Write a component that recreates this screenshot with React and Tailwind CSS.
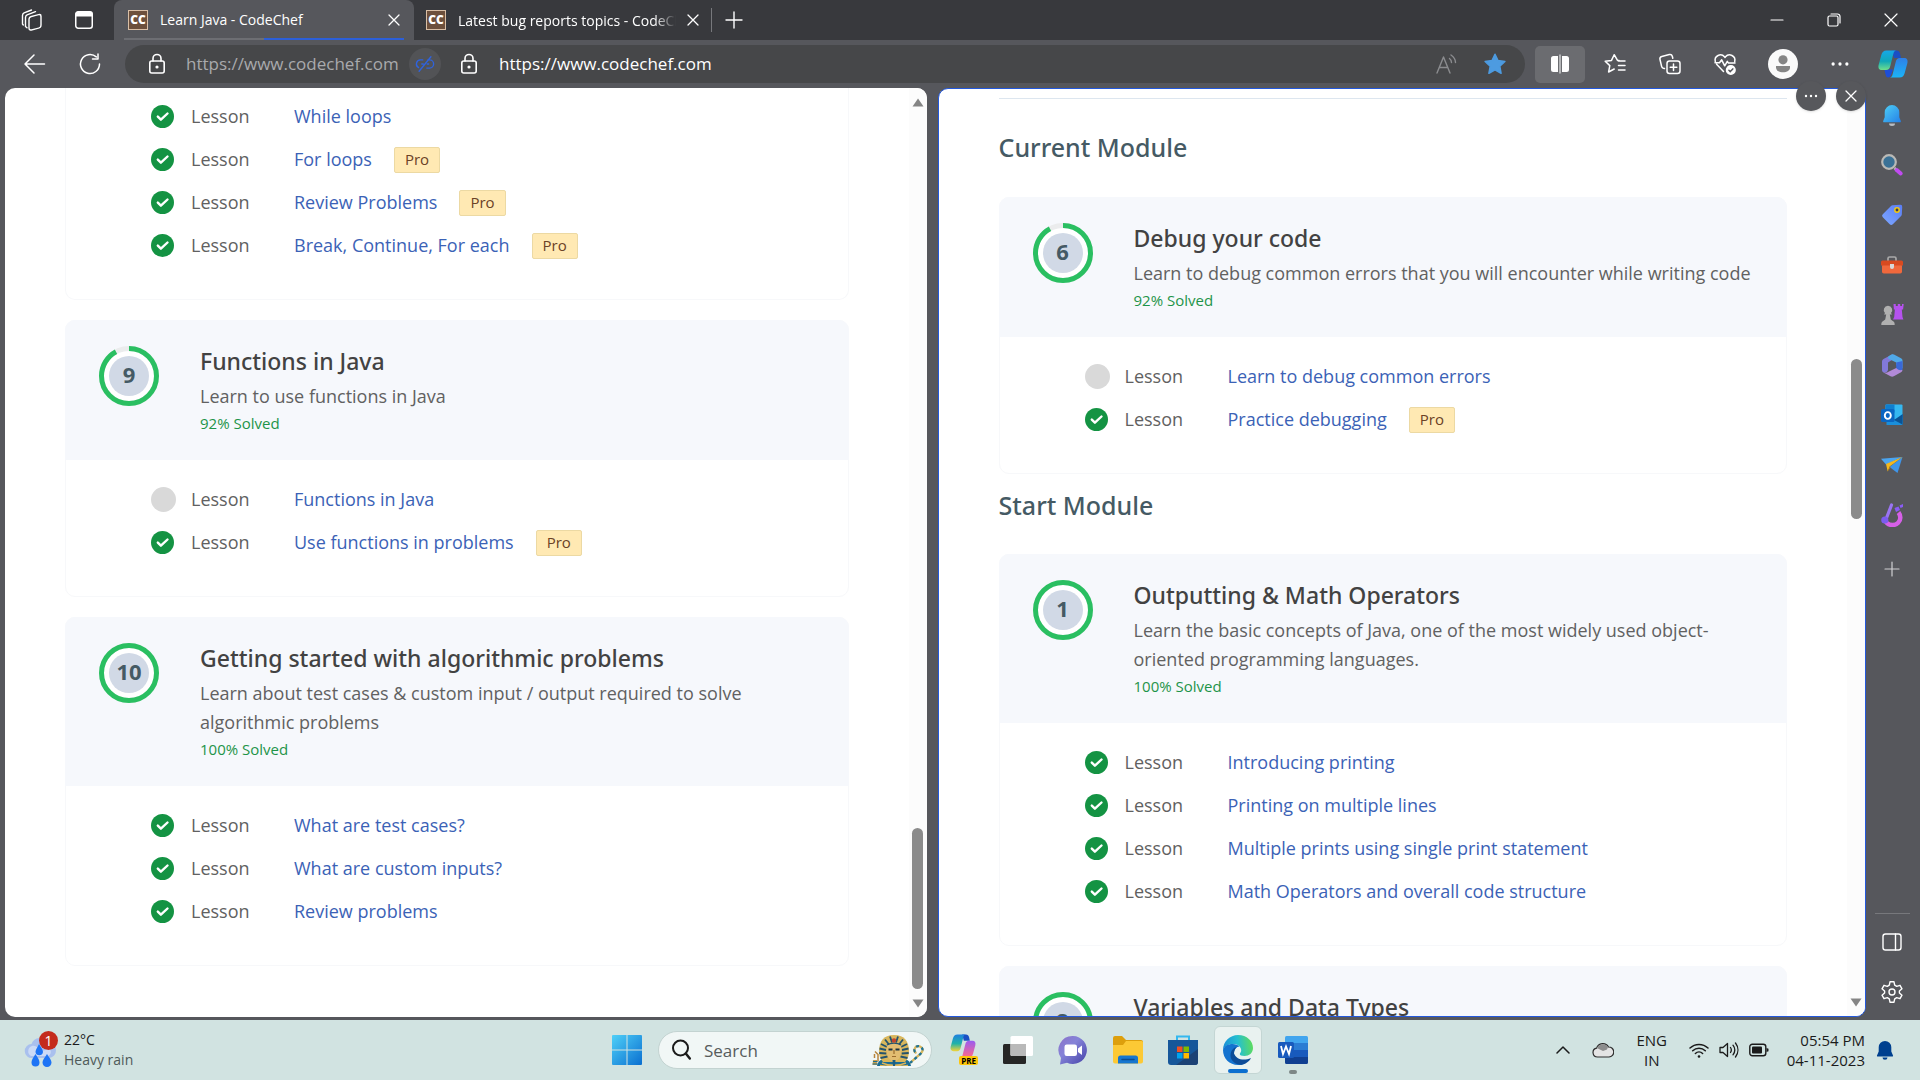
import React from "react";

const rightModules = [
  {
    number: 1,
    title: "Outputting & Math Operators",
    text: "Learn the basic concepts of Java, one of the most widely used object-oriented programming languages.",
    solved: 100,
    lessons: [
      { name: "Introducing printing", done: true },
      { name: "Printing on multiple lines", done: true },
      { name: "Multiple prints using single print statement", done: true },
      { name: "Math Operators and overall code structure", done: true },
    ],
  },
  {
    number: 2,
    title: "Variables and Data Types",
    solved: 100,
    lessons: [],
  },
];

const currentModule = {
  number: 6,
  title: "Debug your code",
  text: "Learn to debug common errors that you will encounter while writing code",
  solved: 92,
  lessons: [
    { name: "Learn to debug common errors", done: false },
    { name: "Practice debugging", done: true, pro: true },
  ],
};

const loopLessons = [
  { name: "While loops", done: true },
  { name: "For loops", done: true, pro: true },
  { name: "Review Problems", done: true, pro: true },
  { name: "Break, Continue, For each", done: true, pro: true },
];

const leftModules = [
  {
    number: 9,
    title: "Functions in Java",
    text: "Learn to use functions in Java",
    solved: 92,
    lessons: [
      { name: "Functions in Java", done: false },
      { name: "Use functions in problems", done: true, pro: true },
    ],
  },
  {
    number: 10,
    title: "Getting started with algorithmic problems",
    text: "Learn about test cases & custom input / output required to solve algorithmic problems",
    solved: 100,
    lessons: [
      { name: "What are test cases?", done: true },
      { name: "What are custom inputs?", done: true },
      { name: "Review problems", done: true },
    ],
  },
];

/* ---------- course content ---------- */

function ProgressRing({ number, percent }) {
  const length = 2 * Math.PI * 27.5;
  return (
    <div className="grid h-[60px] w-[60px] shrink-0 place-items-center">
      <svg viewBox="0 0 60 60" className="col-start-1 row-start-1 h-[60px] w-[60px]" aria-hidden="true">
        <circle cx="30" cy="30" r="27.5" fill="#fff" stroke="#ebeced" strokeWidth="5" />
        <circle
          cx="30"
          cy="30"
          r="27.5"
          fill="none"
          stroke="#2abf61"
          strokeWidth="5"
          strokeDasharray={`${(length * percent) / 100} ${length}`}
          transform="rotate(-90 30 30)"
        />
        <circle cx="30" cy="30" r="20" fill="#d1d9e6" />
      </svg>
      <span className="col-start-1 row-start-1 pb-1 text-[22px] leading-[28px] font-bold text-[#455a64]">{number}</span>
    </div>
  );
}

function Status({ done }) {
  if (!done) {
    return (
      <svg viewBox="0 0 25 25" className="h-[25px] w-[25px]" role="img" aria-label="Not completed">
        <circle cx="12.5" cy="12.5" r="12.5" fill="#d9d9d9" />
      </svg>
    );
  }
  return (
    <svg viewBox="0 0 23 23" className="h-[23px] w-[23px]" role="img" aria-label="Completed">
      <circle cx="11.5" cy="11.5" r="11.5" fill="#149343" />
      <path d="M6.8 11.6l3.1 3.1 6.6-6.2" fill="none" stroke="#fff" strokeWidth="2.4" strokeLinecap="round" strokeLinejoin="round" />
    </svg>
  );
}

function Lessons({ items }) {
  return (
    <ul className="pt-[18px] pb-8 pl-[85px]">
      {items.map((l) => (
        <li key={l.name} className="flex h-[43px] items-center text-[18px]">
          <span className="w-10">
            <Status done={l.done} />
          </span>
          <span className="w-[103px] text-[#616161]">Lesson</span>
          <a href="#lesson" className="text-[#3b62b6]">{l.name}</a>
          {l.pro && (
            <span className="ml-[22px] flex h-[26px] items-center rounded-[2px] border border-[#ecd9a3] bg-[#ffe9b3] px-[10px] text-[15px] text-[#6b4226]">
              Pro
            </span>
          )}
        </li>
      ))}
    </ul>
  );
}

function ModuleCard({ data }) {
  return (
    <section className="rounded-[10px] border border-[#f7f8fa]">
      <header className="-mx-px -mt-px flex rounded-t-[10px] bg-[#f6f8fc] pt-[26px] pb-[25px] pl-[34px]">
        <ProgressRing number={data.number} percent={data.solved} />
        <div className="ml-[41px] pr-6">
          <h3 className="font-['Noto_Sans',sans-serif] text-[23px] leading-[31px] font-medium text-[#424242]">{data.title}</h3>
          {data.text && <p className="mt-[5px] text-[18px] leading-[29px] text-[#616161]">{data.text}</p>}
          <p className="text-[15px] leading-[24px] text-[#1e9449]">{data.solved}% Solved</p>
        </div>
      </header>
      <Lessons items={data.lessons} />
    </section>
  );
}

function Scrollbar({ space, thumb, up }) {
  return (
    <div className="flex w-[18px] shrink-0 flex-col items-center bg-[#fcfcfc] pt-[10px] pb-[9px]">
      <svg viewBox="0 0 12 9" className={up ? "h-[9px] w-3" : "invisible h-[9px] w-3"}>
        <path d="M6 0.5l5.5 8H.5z" fill="#858585" />
      </svg>
      <div className="w-[11px] shrink-0" style={{ flexGrow: space[0] }} />
      <div className="w-[11px] rounded-full bg-[#8b8b8b]" style={{ flexGrow: thumb }} />
      <div className="w-[11px] shrink-0" style={{ flexGrow: space[1] }} />
      <svg viewBox="0 0 12 9" className="h-[9px] w-3">
        <path d="M6 8.5l5.5-8H.5z" fill="#858585" />
      </svg>
    </div>
  );
}

function LeftPane() {
  return (
    <main className="flex min-w-0 flex-[921] overflow-hidden rounded-[10px] bg-white">
      <div className="min-w-0 flex-1 overflow-hidden px-[60px]">
        <section className="-mt-[11px] rounded-b-[10px] border border-t-0 border-[#f7f8fa]">
          <Lessons items={loopLessons} />
        </section>
        <div className="mt-5 flex flex-col gap-5">
          {leftModules.map((m) => (
            <ModuleCard key={m.number} data={m} />
          ))}
        </div>
      </div>
      <Scrollbar space={[715, 10]} thumb={160} up />
    </main>
  );
}

function RightPane() {
  return (
    <div className="relative flex min-w-0 flex-[928]">
      <main className="flex min-w-0 flex-1 overflow-hidden rounded-[10px] border border-[#2358dc] bg-white">
        <div className="min-w-0 flex-1 overflow-hidden px-[60px] pt-[9px]">
          <hr className="border-[#dde6ef]" />
          <h2 className="mt-[31px] mb-[33px] font-['Noto_Sans',sans-serif] text-[25px] leading-[34px] font-medium text-[#455a64]">Current Module</h2>
          <ModuleCard data={currentModule} />
          <h2 className="mt-[14px] mb-8 font-['Noto_Sans',sans-serif] text-[25px] leading-[34px] font-medium text-[#455a64]">Start Module</h2>
          <div className="flex flex-col gap-5">
            {rightModules.map((m) => (
              <ModuleCard key={m.number} data={m} />
            ))}
          </div>
        </div>
        <Scrollbar space={[247, 472]} thumb={158} />
      </main>
      <div className="absolute -top-[7px] right-0 flex gap-[10px] text-white">
        <button aria-label="More options" className="grid h-[30px] w-[30px] place-items-center rounded-full bg-[#57585c] shadow">
          <Dots className="h-4 w-4" />
        </button>
        <button aria-label="Close pane" className="grid h-[30px] w-[30px] place-items-center rounded-full bg-[#57585c] shadow">
          <Cross className="h-3 w-3" />
        </button>
      </div>
    </div>
  );
}

/* ---------- browser chrome ---------- */

function Line({ box = 24, className = "h-6 w-6", width = 1.5, children }) {
  return (
    <svg
      viewBox={`0 0 ${box} ${box}`}
      className={className}
      fill="none"
      stroke="currentColor"
      strokeWidth={width}
      strokeLinecap="round"
      strokeLinejoin="round"
      aria-hidden="true"
    >
      {children}
    </svg>
  );
}

function Cross({ className = "h-3 w-3" }) {
  return (
    <Line box={12} className={className} width={1.3}>
      <path d="M1 1l10 10M11 1L1 11" />
    </Line>
  );
}

function Dots({ className = "h-5 w-5" }) {
  return (
    <svg viewBox="0 0 16 16" className={className} fill="currentColor" aria-hidden="true">
      <circle cx="3" cy="8" r="1.2" />
      <circle cx="8" cy="8" r="1.2" />
      <circle cx="13" cy="8" r="1.2" />
    </svg>
  );
}

function Favicon() {
  return (
    <span className="grid h-5 w-5 shrink-0 place-items-center border border-[#d9bfa6] bg-[#6d503c] text-[12px] leading-none font-extrabold text-white">
      CC
    </span>
  );
}

function Lock() {
  return (
    <Line className="h-6 w-6 shrink-0" width={1.6}>
      <rect x="4.8" y="9" width="14.4" height="12" rx="2" />
      <path d="M8 9V6.500a4 4 0 0 1 8 0V9" />
      <circle cx="12" cy="15" r=".8" fill="currentColor" />
    </Line>
  );
}

function TabBar() {
  return (
    <div className="flex h-10 bg-[#38393d] text-white">
      <div className="flex w-[114px] items-center gap-[30px] pl-5">
        <button aria-label="Workspaces">
          <Line width={1.4}>
            <rect x="9" y="7.500" width="12" height="13.500" rx="2.400" transform="skewY(-14) translate(0 3.800)" />
            <path d="M5.500 18.500V9.500a3 3 0 0 1 1.600-2.600L15.500 3.600M2.500 16V7.500A3 3 0 0 1 4.100 4.900L11.500 2M5.500 18.500l1.500 1.300M2.500 16l.8 1" />
          </Line>
        </button>
        <button aria-label="Tab actions">
          <svg viewBox="0 0 20 20" className="h-5 w-5">
            <rect x="1.750" y="1.750" width="16.500" height="16.500" rx="2.500" fill="none" stroke="#fff" strokeWidth="1.500" />
            <path d="M1.500 6.500V4a2.500 2.500 0 0 1 2.500-2.500h12A2.500 2.500 0 0 1 18.500 4v2.500z" fill="#fff" />
          </svg>
        </button>
      </div>
      <div className="flex w-[300px] flex-col rounded-t-lg bg-[#56575c] px-[10px]">
        <div className="flex flex-1 items-center pt-px pr-1 pl-1">
          <Favicon />
          <span className="ml-3 flex-1 text-[14px]">Learn Java - CodeChef</span>
          <button aria-label="Close Learn Java tab">
            <Cross />
          </button>
        </div>
        <div className="flex h-[2px]">
          <span className="flex-1 bg-[#6d6e73]" />
          <span className="flex-1 bg-[#2c5fd8]" />
        </div>
      </div>
      <div className="flex w-[298px] items-center pr-0 pl-3">
        <Favicon />
        <span className="ml-3 w-[218px] overflow-hidden [mask-image:linear-gradient(to_right,#000_90%,transparent)] text-[14px] whitespace-nowrap">
          Latest bug reports topics - CodeChef
        </span>
        <button aria-label="Close Latest bug reports tab" className="ml-[11px]">
          <Cross />
        </button>
        <span className="ml-auto h-6 w-px bg-[#77787c]" />
      </div>
      <button aria-label="New tab" className="ml-[13px]">
        <Line box={18} className="h-[18px] w-[18px]" width={1.4}>
          <path d="M9 1v16M1 9h16" />
        </Line>
      </button>
      <div className="ml-auto flex items-center gap-[43px] pr-[22px]">
        <button aria-label="Minimize">
          <Line box={14} className="h-[14px] w-[14px]" width={1.2}>
            <path d="M1 7h12" />
          </Line>
        </button>
        <button aria-label="Restore">
          <Line box={14} className="h-[14px] w-[14px]" width={1.2}>
            <rect x="1" y="3" width="10" height="10" rx="1.500" />
            <path d="M4 1h6.500A2.500 2.500 0 0 1 13 3.500V10" />
          </Line>
        </button>
        <button aria-label="Close window">
          <Line box={14} className="h-[14px] w-[14px]" width={1.2}>
            <path d="M1 1l12 12M13 1L1 13" />
          </Line>
        </button>
      </div>
    </div>
  );
}

function Copilot({ className, pre }) {
  return (
    <svg viewBox="0 0 30 28" className={className} aria-hidden="true">
      <defs>
        <linearGradient id={pre ? "cpA" : "cA"} x1="0" y1="0" x2="0" y2="1">
          <stop offset="0" stopColor={pre ? "#1f7fe0" : "#16a7e8"} />
          <stop offset=".55" stopColor={pre ? "#1fb3a8" : "#10a7b8"} />
          <stop offset="1" stopColor={pre ? "#f2d338" : "#6fdf8c"} />
        </linearGradient>
        <linearGradient id={pre ? "cpB" : "cB"} x1="0" y1="0" x2="0" y2="1">
          <stop offset="0" stopColor={pre ? "#9a5cf0" : "#2f7fe6"} />
          <stop offset="1" stopColor={pre ? "#ff6a8a" : "#1bb4f7"} />
        </linearGradient>
      </defs>
      <path d="M14 .5h4.500c2 0 3 1 3.500 3l1 4.500h-7z" fill="#1a4fc4" />
      {!pre && <path d="M8 19.500h7l-2 5.500c-.5 1.500-1.500 2.500-3 2.500-1.200 0-2-1-2.300-2.500L6.500 20z" fill="#1d4ed8" />}
      <path d="M8.500.5h10c-2 0-2.700 1.500-3.200 3.500l-3 12c-.6 2.500-1.800 4-4.300 4H4C1 20 0 18 .6 15L3.300 5C4.200 2 5.500.5 8.500.5z" fill={pre ? "url(#cpA)" : "url(#cA)"} />
      <path d="M21.500 27.500h-10c2 0 2.700-1.500 3.200-3.500l3-12c.6-2.500 1.800-4 4.300-4h4c3 0 4 2 3.400 5l-2.700 10c-.9 3-2.200 4.500-5.200 4.500z" fill={pre ? "url(#cpB)" : "url(#cB)"} />
    </svg>
  );
}

function Toolbar() {
  return (
    <div className="flex h-12 items-center bg-[#56575c] pt-0 text-white">
      <button aria-label="Back" className="ml-[23px]">
        <Line>
          <path d="M21.500 12H2.500M11 3L2 12l9 9" />
        </Line>
      </button>
      <button aria-label="Refresh" className="ml-[31px]">
        <Line>
          <path d="M21.500 12a9.500 9.500 0 1 1-3.200-7.100M20 2v5h-5.500" />
        </Line>
      </button>
      <div className="ml-[23px] flex h-[38px] min-w-0 flex-1 items-center rounded-full bg-[#464749] pr-[18px] pl-5 text-[17px]">
        <Lock />
        <input aria-label="Left pane address" defaultValue="https://www.codechef.com" className="ml-[17px] w-[223px] bg-transparent text-[#a9aaad] outline-none" />
        <button aria-label="Unlink panes" className="grid h-8 w-8 shrink-0 place-items-center rounded-full bg-[#525356] text-[#2f63dd]">
          <Line box={22} className="h-5 w-5" width={1.5}>
            <path d="M8.500 6.500H6a4.500 4.500 0 0 0-2 8.500M14 6.500h2a4.500 4.500 0 0 1 0 9h-3M7.500 11h1.500M13.500 11h1.500M17.500 3L4.500 19" />
          </Line>
        </button>
        <span className="ml-4 flex min-w-0 flex-1 items-center">
          <Lock />
          <input aria-label="Right pane address" defaultValue="https://www.codechef.com" className="ml-[18px] min-w-0 flex-1 bg-transparent text-white outline-none" />
        </span>
        <button aria-label="Read aloud" className="text-[#8b8c8f]">
          <Line width={1.4}>
            <path d="M3 21L9.500 5 16 21M5.200 15.500h8.600M15.500 6.500c1.300 1 2 2.400 2 4M17 3c2.500 1.700 4.500 4.500 4.500 7.500" />
          </Line>
        </button>
        <button aria-label="Edit favorite" className="ml-[25px]">
          <svg viewBox="0 0 24 24" className="h-6 w-6">
            <path d="M12 2.200l3 6.400 6.900.9-5.100 4.800 1.300 7L12 17.900 5.900 21.300l1.300-7L2.100 9.500 9 8.600z" fill="#4d9be0" stroke="#4d9be0" strokeWidth="1.500" strokeLinejoin="round" />
          </svg>
        </button>
      </div>
      <button aria-label="Split screen" className="ml-[10px] grid h-[37px] w-[50px] place-items-center rounded-[5px] bg-[#6b6c70]">
        <svg viewBox="0 0 20 20" className="h-5 w-5" fill="#fff">
          <path d="M8 2H3.500A2.500 2.500 0 0 0 1 4.500v11A2.500 2.500 0 0 0 3.500 18H8zM12 2h4.500A2.500 2.500 0 0 1 19 4.500v11a2.500 2.500 0 0 1-2.500 2.500H12zM9.500.5h1v19h-1z" />
        </svg>
      </button>
      <div className="flex items-center gap-[31px] pl-[18px]">
        <button aria-label="Favorites">
          <Line>
            <path d="M16 8.600l-1.500-.2-3.300-5.700-2.700 5.700-6.300.9 4.600 4.300-1.200 6.400 5.600-3M15.500 9h6.500M15.500 13.500h6.500M15.500 18h6.500" />
          </Line>
        </button>
        <button aria-label="Collections">
          <Line>
            <rect x="9" y="9" width="13" height="12.500" rx="2.500" />
            <path d="M15.500 12v6.500M12.200 15.200h6.600M6.500 16.500l-1.200-.3a2.500 2.500 0 0 1-1.700-1.900L2 7.500a2.500 2.500 0 0 1 1.800-3l7.500-2a2.500 2.500 0 0 1 3 1.800l.5 2" />
          </Line>
        </button>
        <button aria-label="Browser essentials">
          <Line>
            <path d="M10.500 19.500L3.600 12.300M2.300 9.500A5.300 5.300 0 0 1 11.500 4.800l.5.600.5-.6a5.300 5.300 0 0 1 9.200 4.700M2 10.800h4.500l2.200-3 3 6 2.600-4.500 1.200 1.800H22" />
            <circle cx="17.800" cy="18" r="4.300" fill="currentColor" />
            <path d="M15.900 18.200l1.400 1.400 2.500-2.700" stroke="#56575c" />
          </Line>
        </button>
      </div>
      <button aria-label="Profile" className="ml-[31px]">
        <svg viewBox="0 0 30 30" className="h-[30px] w-[30px]">
          <circle cx="15" cy="15" r="15" fill="#fafafa" />
          <circle cx="15" cy="10.800" r="4.600" fill="#858585" />
          <path d="M8 17h14v1.500c0 3-3 4.800-7 4.800s-7-1.800-7-4.800z" fill="#858585" />
        </svg>
      </button>
      <button aria-label="Settings and more" className="ml-[31px]">
        <Dots className="h-[22px] w-[22px]" />
      </button>
      <button aria-label="Copilot" className="mr-3 ml-[27px]">
        <Copilot className="h-7 w-[30px]" />
      </button>
    </div>
  );
}

function Sidebar() {
  return (
    <aside className="flex w-[54px] shrink-0 flex-col items-center pr-[2px] text-white">
      <div className="flex flex-col items-center gap-[26px] pt-[15px]">
        <button aria-label="Notifications">
          <svg viewBox="0 0 24 24" className="h-6 w-6">
            <defs>
              <linearGradient id="bell" x1="0" y1="0" x2="1" y2="1">
                <stop offset="0" stopColor="#4fd0f5" />
                <stop offset="1" stopColor="#2480e8" />
              </linearGradient>
            </defs>
            <path d="M9 20.500h6a3 2.500 0 0 1-6 0z" fill="#b8bcc2" />
            <path d="M12 2a7.300 7.300 0 0 0-7.300 7.300v5L3.200 18c-.2.700.1 1.300.8 1.300h16c.7 0 1-.6.800-1.300l-1.500-3.700v-5A7.300 7.300 0 0 0 12 2z" fill="url(#bell)" />
          </svg>
        </button>
        <button aria-label="Search">
          <svg viewBox="0 0 24 24" className="h-6 w-6">
            <path d="M14.500 15l2.500 2.500" stroke="#bbb" strokeWidth="2.500" />
            <path d="M16.700 17l4 3.500" stroke="#c04bf0" strokeWidth="4" strokeLinecap="round" />
            <circle cx="9" cy="9" r="6.800" fill="#3a7196" stroke="#bab9b6" strokeWidth="2.200" />
          </svg>
        </button>
        <button aria-label="Shopping">
          <svg viewBox="0 0 24 24" className="h-6 w-6">
            <defs>
              <linearGradient id="tag" x1="1" y1="0" x2="0" y2="1">
                <stop offset="0" stopColor="#5a7df5" />
                <stop offset="1" stopColor="#7ea8ff" />
              </linearGradient>
            </defs>
            <path d="M12.500 2.300L20 1.800a2 2 0 0 1 2.200 2.200l-.4 7.500c0 .6-.3 1-.7 1.400l-8.300 8.300a2.200 2.200 0 0 1-3.100 0l-6.900-6.900a2.200 2.200 0 0 1 0-3.100L11 3c.4-.4.900-.7 1.500-.7z" fill="url(#tag)" />
            <circle cx="17" cy="7" r="2.200" fill="#3c3c50" stroke="#f2c811" strokeWidth="1.500" />
          </svg>
        </button>
        <button aria-label="Tools">
          <svg viewBox="0 0 24 24" className="h-6 w-6">
            <path d="M8 8V5.500A1.500 1.500 0 0 1 9.500 4h5A1.500 1.500 0 0 1 16 5.500V8" fill="none" stroke="#a9a9a9" strokeWidth="1.700" />
            <rect x="2" y="11" width="20" height="9.500" rx="1.800" fill="#f0683c" />
            <path d="M2.500 7.500h19A1.500 1.500 0 0 1 23 9v3.500H1V9a1.500 1.500 0 0 1 1.500-1.500z" fill="#d84a20" />
            <path d="M10 11h4v3a2 2 0 0 1-4 0z" fill="#d8d8d8" />
          </svg>
        </button>
        <button aria-label="Games">
          <svg viewBox="0 0 24 24" className="h-6 w-6">
            <path d="M13.500 1h2.300v2h2V1h2.400v2h1.800V1h1.700l-.6 5.500h-1.300l.7 7.500.9 2.500H13l1.200-2.500.7-7.500h-1z" fill="#b552ee" />
            <path d="M8 2.800a4.200 4.200 0 0 1 3 7.200l1 1.500H9.800l1 5 3 2.300c.6.500.9 1.500.9 3.200H1.300c0-1.700.3-2.700.9-3.200l3-2.300 1-5H4L5 10a4.200 4.200 0 0 1 3-7.200z" fill="#b0b0b0" />
          </svg>
        </button>
        <button aria-label="Microsoft 365">
          <svg viewBox="0 0 24 24" className="h-6 w-6">
            <path d="M12.500 1.200L3.500 6A3 3 0 0 0 2 8.500v8.600c0 1.200.6 2 1.500 2.500 2 .6 4-.5 4.500-2.500V9.500L13.500 6z" fill="#8279d9" />
            <path d="M12 1.300a3 3 0 0 1 2 .1l7 3.900c1 .6 1.500 1.500 1.500 2.600v7.600l-6.300-3.200V9.600L8 5.500l.5-2.300z" fill="#50a9e8" />
            <path d="M22.500 8v8a3 3 0 0 1-1.600 2.700l-4.700-2.500V9.600z" fill="#3a68d8" />
            <path d="M3.500 19.600l7 3.600a3.400 3.400 0 0 0 3.300 0l7.200-4a3 3 0 0 0 1.500-2.500c-2 1-4 .5-6.300-1.700L9 18.500c-1.500 1-3.500 1.500-5.500 1.100z" fill="#b28ad8" />
          </svg>
        </button>
        <button aria-label="Outlook">
          <svg viewBox="0 0 24 24" className="h-6 w-6">
            <rect x="5.500" y="1.500" width="17" height="15" rx="1" fill="#35b8f1" />
            <path d="M5.500 1.500h9v8h-9z" fill="#0f7fd0" />
            <path d="M22.800 11v9.500a1.500 1.500 0 0 1-1.500 1.500H6.500V14l9 3z" fill="#1a8fdb" />
            <path d="M22.800 11L14 17l8.500 4.500z" fill="#0b5394" />
            <rect x="1" y="6" width="13.500" height="13" rx="1.500" fill="#0a66c2" />
            <ellipse cx="7.800" cy="12.500" rx="3" ry="3.400" fill="none" stroke="#fff" strokeWidth="1.900" />
          </svg>
        </button>
        <button aria-label="Drop">
          <svg viewBox="0 0 24 24" className="h-6 w-6">
            <path d="M1 5.800L22.500 4 6 11.500z" fill="#4ba5f0" />
            <path d="M22.500 4L17.500 20 9.500 14z" fill="#3f95ea" />
            <path d="M22.500 4L6 11l1.700 7.500 2-5z" fill="#f5b81c" />
            <path d="M7.700 18.500l3-4-1-1z" fill="#b77b12" />
          </svg>
        </button>
        <button aria-label="Image creator">
          <svg viewBox="0 0 24 24" className="h-6 w-6">
            <path d="M4.500 15a7.800 7.200 0 0 0 15.800-.5c0-2-.6-3.500-1.800-5" fill="none" stroke="#d660e8" strokeWidth="4.500" />
            <path d="M11.500 2L6.500 15" stroke="#9a74f2" strokeWidth="3.200" strokeLinecap="round" />
            <circle cx="4.800" cy="17" r="3.600" fill="#7c5cf0" />
            <path d="M14.500 5l4-1.500 1.500 3.500-4 2zM19.500 2.500l3.500-1.500v3l-2.500 1z" fill="#8a5cf5" />
          </svg>
        </button>
        <button aria-label="Customize sidebar" className="mt-2 text-[#d0d0d2]">
          <Line box={16} className="h-4 w-4" width={1.2}>
            <path d="M8 1v14M1 8h14" />
          </Line>
        </button>
      </div>
      <div className="mt-auto flex flex-col items-center gap-[26px] pb-4">
        <hr className="w-[35px] border-[#77787c]" />
        <button aria-label="Hide sidebar" className="-mt-[10px]">
          <Line width={1.4}>
            <rect x="3" y="4" width="18" height="16" rx="2.500" />
            <path d="M15.500 4v16" />
          </Line>
        </button>
        <button aria-label="Sidebar settings">
          <Line width={1.4}>
            <circle cx="12" cy="12" r="3" />
            <path d="M10 1.800h4l.7 3.400 2 1.200 3.300-1.100 2 3.500-2.600 2.200v2l2.600 2.200-2 3.500-3.300-1.100-2 1.200-.7 3.400h-4l-.7-3.400-2-1.200L4 18.700l-2-3.500L4.600 13v-2L2 8.800l2-3.500 3.300 1.100 2-1.200z" />
          </Line>
        </button>
      </div>
    </aside>
  );
}

/* ---------- taskbar ---------- */

function Pharaoh() {
  return (
    <svg viewBox="0 0 52 32" className="h-8 w-[52px]" aria-hidden="true">
      <path d="M3 17.500l3 3v7M2.500 20v4" fill="none" stroke="#b9853c" strokeWidth="1.500" />
      <path d="M1 26h4l.5 5H.5z" fill="#c9a04c" />
      <path d="M1 27.500h4.500M.5 30h5" stroke="#1d6f92" strokeWidth="1.200" />
      <path d="M5 32c1-5 4-7 7-7h20c3 0 6 2 7 7z" fill="#1b6d94" />
      <path d="M10 29c7 3 17 3 24 0M8 31.500c8 1 20 1 28 0" fill="none" stroke="#dcb65a" strokeWidth="1.400" />
      <path d="M22 1C11 1 7.500 7.500 7 16.500c-.2 4 1 8.500 4 11.500h22c3-3 4.200-7.500 4-11.500C36.500 7.500 33 1 22 1z" fill="#d8b65c" />
      <path d="M9 10l6 3M7.500 14.500l6.500 1.500M7.300 19l7 .5M8.500 24l7-1.500M35 10l-6 3M36.500 14.500L30 16M36.700 19l-7 .5M35.500 24l-7-1.500M13 5.500l4 5M31 5.500l-4 5M18 2.500l2 6M26 2.500l-2 6" stroke="#24536e" strokeWidth="1.800" />
      <path d="M15 11c4-2.500 10-2.500 14 0 1 5 .5 10-2 13.500l-3.500 3h-3L17 24.500C14.500 21 14 16 15 11z" fill="#e2bd71" />
      <path d="M15 11c4-2.500 10-2.500 14 0" fill="none" stroke="#24536e" strokeWidth="1.200" />
      <path d="M16.500 15.500h4M23.500 15.500h4" stroke="#1c3442" strokeWidth="1.800" />
      <path d="M22 16v4M20 22.500h4" stroke="#9a6b2c" strokeWidth="1.200" />
      <path d="M20.500 26h3l-.5 6h-2z" fill="#1d5f80" />
      <circle cx="22" cy="6.500" r="2.200" fill="#c2452d" />
      <path d="M38 29l8-7c4-3 6-6 3.500-8.500s-6-1.500-7 1.500c-.5 2 .5 3.500 2 4" fill="none" stroke="#d8b65c" strokeWidth="2.300" />
      <path d="M38 29l8-7c4-3 6-6 3.500-8.500s-6-1.500-7 1.500c-.5 2 .5 3.500 2 4" fill="none" stroke="#1f7396" strokeWidth="2.300" strokeDasharray="3 3" />
    </svg>
  );
}

function TaskIcon({ label, children, className = "" }) {
  return (
    <button aria-label={label} className={`relative grid h-12 w-12 place-items-center ${className}`}>
      {children}
    </button>
  );
}

function Taskbar() {
  return (
    <footer className="grid h-[60px] shrink-0 grid-cols-[1fr_auto_1fr] items-center bg-[#d1e3e1] text-[14px] text-[#1b1b1b]">
      <button className="flex items-center pl-6 text-left leading-5" aria-label="Weather">
        <svg viewBox="0 0 34 38" className="h-[38px] w-[34px]" aria-hidden="true">
          <path d="M8 27a7 7 0 0 1-.5-14A9 9 0 0 1 24 12a7.500 7.500 0 0 1 1 15z" fill="#a9c0ee" />
          <path d="M7 25a5.500 5.500 0 0 1 1-10c4-1 6 2 8 4s6 0 9-2c3 3 2 7-1 8z" fill="#cbdaf6" />
          <path d="M15 13c2.500 4 4 6 4 8a3.800 3.800 0 0 1-7.500 0c0-2 1.500-4 3.500-8zM11.500 23c2.500 4 4 6 4 8.500a4 4 0 0 1-8 0c0-2.500 1.500-4.500 4-8.500zM23 23c2.500 4 4.500 6 4.500 8.500a4.500 4.500 0 0 1-9 0c0-2.500 2-4.500 4.500-8.500z" fill="#1e74f5" />
          <circle cx="24.500" cy="9.500" r="9.500" fill="#c42b1c" />
          <text x="24.500" y="14.500" textAnchor="middle" fontSize="14" fill="#fff">1</text>
        </svg>
        <span className="ml-[6px]">
          <span className="block">22°C</span>
          <span className="block text-[#4f5a5a]">Heavy rain</span>
        </span>
      </button>

      <div className="flex items-center gap-[7px]">
        <TaskIcon label="Start">
          <svg viewBox="0 0 30 30" className="h-[30px] w-[30px]">
            <defs>
              <linearGradient id="win" x1="0" y1="0" x2="1" y2="1">
                <stop offset="0" stopColor="#4fd0f8" />
                <stop offset="1" stopColor="#0a6fd0" />
              </linearGradient>
            </defs>
            <path d="M1 0h13.500v14.500H0V1a1 1 0 0 1 1-1zM15.500 0H29a1 1 0 0 1 1 1v13.500H15.500zM0 15.500h14.500V30H1a1 1 0 0 1-1-1zM15.500 15.500H30V29a1 1 0 0 1-1 1H15.500z" fill="url(#win)" />
          </svg>
        </TaskIcon>
        <label className="flex h-[38px] w-[274px] items-center rounded-full border border-[#c3d3d1] bg-[#f1f7f6] pr-[7px] pl-[10px]">
          <Line className="h-6 w-6 shrink-0 text-[#1b1b1b]" width={2}>
            <circle cx="11.500" cy="10" r="7.500" />
            <path d="M16.800 15.500l4 5" strokeWidth="2.500" />
          </Line>
          <input aria-label="Search" placeholder="Search" className="ml-[11px] h-7 w-0 min-w-0 flex-1 bg-transparent text-[17px] outline-none placeholder:text-[#575c5c]" />
          <Pharaoh />
        </label>
        <TaskIcon label="Copilot preview">
          <Copilot className="h-6 w-7 -translate-y-1" pre />
          <span className="absolute right-[9px] bottom-[9px] rounded-[2px] bg-[#fdc60a] px-[2px] text-[8px] leading-[9px] font-bold text-black">PRE</span>
        </TaskIcon>
        <TaskIcon label="Task view">
          <svg viewBox="0 0 30 28" className="h-7 w-[30px]">
            <rect x="0" y="8" width="23" height="20" rx="1.500" fill="#262625" />
            <rect x="7.500" y="0" width="22.500" height="20" rx="1.500" fill="#fff" />
            <path d="M7.500 8H23v12H9a1.500 1.500 0 0 1-1.500-1.500z" fill="#b9b9b9" />
          </svg>
        </TaskIcon>
        <TaskIcon label="Chat">
          <svg viewBox="0 0 30 30" className="h-[30px] w-[30px]">
            <defs>
              <linearGradient id="chat" x1="0" y1="0" x2="1" y2="1">
                <stop offset="0" stopColor="#8d72c9" />
                <stop offset=".4" stopColor="#8583d8" />
                <stop offset="1" stopColor="#4442a8" />
              </linearGradient>
            </defs>
            <path d="M15 1a14 14 0 1 1-6 26.700L2 29.500 3 23A14 14 0 0 1 15 1z" fill="url(#chat)" />
            <rect x="6.500" y="9.500" width="12.500" height="11.500" rx="2.200" fill="#fff" />
            <path d="M20 13.500l4-3v9.500l-4-3z" fill="#fff" />
          </svg>
        </TaskIcon>
        <TaskIcon label="File Explorer">
          <svg viewBox="0 0 30 28" className="h-7 w-[30px]">
            <path d="M0 2a2 2 0 0 1 2-2h7l4 4h15a2 2 0 0 1 2 2v4H0z" fill="#dd9f0c" />
            <path d="M0 9h10l3-4h15.500A1.500 1.500 0 0 1 30 6.500v19a2 2 0 0 1-2 2H2a2 2 0 0 1-2-2z" fill="#fcc935" />
            <path d="M5 27.500V22a2.500 2.500 0 0 1 2.500-2.500h15A2.500 2.500 0 0 1 25 22v5.500z" fill="#1676cf" />
            <path d="M9 23.500h12" stroke="#0b4b90" strokeWidth="1.500" strokeLinecap="round" />
          </svg>
        </TaskIcon>
        <TaskIcon label="Microsoft Store">
          <svg viewBox="0 0 30 30" className="h-[30px] w-[30px]">
            <path d="M9 6V1.500h12V6" fill="none" stroke="#34b8ef" strokeWidth="2" />
            <path d="M0 5h30v22a3 3 0 0 1-3 3H3a3 3 0 0 1-3-3z" fill="#16579a" />
            <path d="M30 14v13a3 3 0 0 1-3 3H8z" fill="#1c4275" />
            <path d="M9 11.500h5.500V17H9z" fill="#f25022" />
            <path d="M15.500 11.500H21V17h-5.500z" fill="#7fba00" />
            <path d="M9 18h5.500v5.500H9z" fill="#00a4ef" />
            <path d="M15.500 18H21v5.500h-5.500z" fill="#ffb900" />
          </svg>
        </TaskIcon>
        <TaskIcon label="Microsoft Edge" className="rounded-md border border-[#c4d6d4] bg-[#e9f2f0]">
          <svg viewBox="0 0 30 30" className="h-[30px] w-[30px]">
            <defs>
              <linearGradient id="edge" x1="0" y1=".5" x2="1" y2=".4">
                <stop offset="0" stopColor="#1b8fd8" />
                <stop offset=".5" stopColor="#25bfd0" />
                <stop offset="1" stopColor="#5fdd5a" />
              </linearGradient>
            </defs>
            <path d="M15 0c9 0 15 6 15 13 0 5-4 8-8.500 8-3 0-5-1-4.700-2.300C18 17 18.500 16 18 14c-.7-3-4-5-8-5C5 9 1.500 11.500 0 15 0 6.500 7 0 15 0z" fill="url(#edge)" />
            <path d="M0 15c1-4 5-6 9.500-6 3 0 5.500 1 7 2.500-3 0-5.500 3-5.500 7 0 6 5 10.500 10 11-2 .5-4 .5-6 .5C6.500 30 0 23.500 0 15z" fill="#1473cf" />
            <path d="M11 18.500c0-2.500 1-5 2.600-6.300C11.500 12 7.500 15 7.500 20.500c0 4.500 4 8.500 9.500 9.300 5 0 9-3 11-6.800-8 3.500-15 1-17-4.500z" fill="#0c4c98" />
          </svg>
          <span className="absolute bottom-0 h-1 w-5 rounded-full bg-[#0b6fd0]" />
        </TaskIcon>
        <TaskIcon label="Word">
          <svg viewBox="0 0 30 28" className="h-7 w-[30px]">
            <path d="M7 1.500A1.500 1.500 0 0 1 8.500 0h20A1.500 1.500 0 0 1 30 1.500V7H7z" fill="#41a5ee" />
            <path d="M7 7h23v7H7z" fill="#2b7cd3" />
            <path d="M7 14h23v7H7z" fill="#185abd" />
            <path d="M7 21h23v5.500a1.500 1.500 0 0 1-1.500 1.500h-20A1.500 1.500 0 0 1 7 26.500z" fill="#103f91" />
            <rect x="0" y="6" width="16" height="16" rx="1.500" fill="#185abd" />
            <path d="M3 10l2 8 3-7.500 3 7.500 2-8" fill="none" stroke="#fff" strokeWidth="1.800" />
          </svg>
          <span className="absolute bottom-0 h-1 w-2 rounded-full bg-[#7d8786]" />
        </TaskIcon>
      </div>

      <div className="flex items-center justify-end pr-[26px] text-[15px] leading-5">
        <button aria-label="Show hidden icons">
          <Line box={14} className="h-[14px] w-[14px]" width={1.5}>
            <path d="M1 10l6-6 6 6" />
          </Line>
        </button>
        <button aria-label="OneDrive" className="ml-[22px]">
          <svg viewBox="0 0 22 16" className="h-4 w-[22px]" stroke="#2c2c2c" strokeWidth="1.200">
            <path d="M5.500 15A4.500 4.500 0 0 1 4.600 6.100 6.500 6.500 0 0 1 16.500 5a5 5 0 0 1 .5 10z" fill="#e4e4e4" />
            <path d="M4.800 6.100A6.500 6.500 0 0 1 16 5l-1 2.500L11 9z" fill="#8d8d8d" stroke="none" />
          </svg>
        </button>
        <button aria-label="Input language" className="ml-[22px] w-8 text-center">
          ENG
          <br />
          IN
        </button>
        <button aria-label="Network, volume and battery" className="ml-[21px] flex items-center gap-[10px]">
          <Line box={20} className="h-5 w-5" width={1.5}>
            <path d="M1 8a13 13 0 0 1 18 0M3.700 10.800a9 9 0 0 1 12.600 0M6.400 13.500a5.200 5.200 0 0 1 7.200 0" />
            <circle cx="10" cy="16.500" r="1.300" fill="currentColor" stroke="none" />
          </Line>
          <Line box={20} className="h-5 w-5" width={1.300}>
            <path d="M1 7.500h3L8.500 3.500v13L4 12.500H1zM11.500 7.500c1 1.500 1 3.500 0 5M14 5.200c2.200 2.900 2.200 6.700 0 9.600M16.500 3c3.200 4.200 3.200 9.800 0 14" />
          </Line>
          <svg viewBox="0 0 20 14" className="h-[14px] w-5">
            <rect x=".8" y="1.300" width="16" height="11.400" rx="2.500" fill="none" stroke="#1b1b1b" strokeWidth="1.400" />
            <rect x="3" y="3.500" width="10" height="7" rx="1" fill="#1b1b1b" />
            <path d="M17.500 5l2 .7v2.600l-2 .7z" fill="#1b1b1b" />
          </svg>
        </button>
        <button aria-label="Clock" className="ml-[18px] text-right">
          05:54 PM
          <br />
          04-11-2023
        </button>
        <button aria-label="Notification center" className="ml-[11px]">
          <svg viewBox="0 0 18 20" className="h-5 w-[18px]" fill="#00408f">
            <path d="M9 1a6.300 6.300 0 0 0-6.300 6.300v4.200L1 15.500c-.2.600.1 1 .7 1h14.600c.6 0 .9-.4.700-1l-1.700-4V7.300A6.300 6.300 0 0 0 9 1zM6.500 17.500h5a2.500 2.300 0 0 1-5 0z" />
          </svg>
        </button>
      </div>
    </footer>
  );
}

export default function App() {
  return (
    <div className="flex h-screen flex-col overflow-hidden bg-[#56575c] font-['Open_Sans','Noto_Sans',sans-serif]">
      <TabBar />
      <Toolbar />
      <div className="flex min-h-0 flex-1">
        <div className="flex min-w-0 flex-1 gap-[11px] pb-[3px] pl-[5px]">
          <LeftPane />
          <RightPane />
        </div>
        <Sidebar />
      </div>
      <Taskbar />
    </div>
  );
}
